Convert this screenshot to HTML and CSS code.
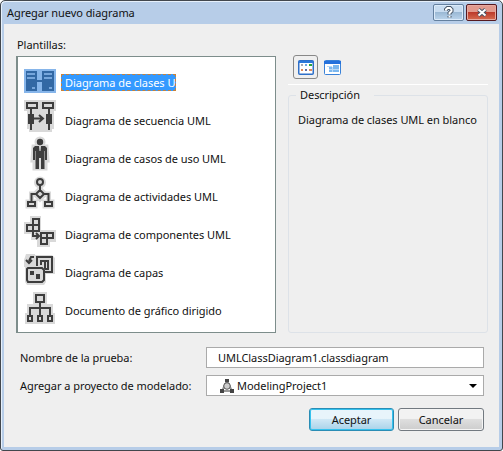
FILE: index.html
```
<!DOCTYPE html>
<html lang="es">
<head>
<meta charset="utf-8">
<title>Agregar nuevo diagrama</title>
<link rel="stylesheet" href="styles.css">
</head>
<body>
<main class="dialog">
  <header class="titlebar">
    <h1>Agregar nuevo diagrama</h1>
    <button class="cap help" aria-label="Ayuda"><svg width="12" height="13" viewBox="0 0 12 13"><path class="out" d="M3 4.500V3.500L4.500 2H7L8.500 3.500V5L6.500 7V8.500M6.500 10V11.500"/><path class="in" d="M3 4.500V3.500L4.500 2H7L8.500 3.500V5L6.500 7V8.500M6.500 10V11.500"/></svg></button>
    <button class="cap close" aria-label="Cerrar"><svg width="12" height="11" viewBox="0 0 12 11"><path class="out" d="M2.500 2.500L9.500 8.500M9.500 2.500L2.500 8.500"/><path class="in" d="M2.500 2.500L9.500 8.500M9.500 2.500L2.500 8.500"/></svg></button>
  </header>
  <section class="body">
    <div class="top">
      <div class="left">
        <h2>Plantillas:</h2>
        <ul class="list">
          <li class="selected"><svg class="ico" viewBox="0 0 32 38"><path fill="#86b5ea" d="M0 5H32V29H0Z"/><path fill="#3268a4" d="M2 7H13V27H2ZM18 7H30V27H18ZM13 16H18V18H13Z"/><path stroke="#8dbbee" stroke-width="1.500" d="M3 10H11M3 14H11M20 10H28M20 14H28M8 24H11M25 24H28"/></svg><span class="name">Diagrama de clases U</span></li>
          <li><svg class="ico" viewBox="0 0 32 38"><path fill="#d9d9d9" d="M0-2H32V9H30V27H28V30H5V27H3V9H0Z"/><path class="ink" d="M3 1H13V6H3ZM19 1H29V6H19ZM7 7V28M25 7V28M10 16.500H19M15 13L19 16.500L15 20"/><path class="solid" d="M4 12H10V22H4ZM22 12H28V22H22Z"/></svg><span class="name">Diagrama de secuencia UML</span></li>
          <li><svg class="ico" viewBox="0 0 32 38"><path class="halo" d="M16-1A3 3 0 0 1 16 5A3 3 0 0 1 16-1M10 7H22L23 20H21V28H11V20H9Z"/><circle class="solid" cx="16" cy="2" r="3.200"/><path class="solid" d="M11 6H21L23 8V20H21V11H20.500V29H17V18H15V29H11.500V11H11V20H9V8Z"/><path fill="#d9d9d9" d="M15 6H17L16.500 11H15.500Z"/></svg><span class="name">Diagrama de casos de uso UML</span></li>
          <li><svg class="ico" viewBox="0 0 32 38"><path class="halo" d="M16 1A3 3 0 0 1 16 8A3 3 0 0 1 16 1M16 8V12M16 11L21 16L16 21L11 16ZM11 16H7.500V24M21 16H24.500V24M4 24H11V28H4ZM21 24H28V28H21Z"/><circle class="ink" cx="16" cy="4" r="3"/><path class="ink" d="M16 7V12M16 12L20 16L16 20L12 16ZM12 16H7.500V24M20 16H24.500V24M4 24H11V28H4ZM21 24H28V28H21Z"/></svg><span class="name">Diagrama de actividades UML</span></li>
          <li><svg class="ico" viewBox="0 0 32 38"><path fill="#d9d9d9" d="M6 0H17V14H32V26H26V31H13V24H7V18H0V6H6Z"/><path class="ink" d="M9 3H15V9H9ZM3 9H15V15H3ZM9 9V15M17 17H29V22H17ZM23 17V22M17 22H23V28H17ZM9 15V20H14M12 17L15 20L12 23"/></svg><span class="name">Diagrama de componentes UML</span></li>
          <li><svg class="ico" viewBox="0 0 32 38"><path fill="#d9d9d9" d="M2 0H11V1H28L31 4V20H22V28L20 31H3L1 28V13H0V6Z"/><path class="ink" d="M13 12V3H28V18H21M17 11V7H24V15H21M21 7V15M10 3H7L5 7M2 6L5 9L8 6M4 14H18L20 16V26L18 28H4L3 26V15Z"/><path class="solid" d="M6 17H10V21H6ZM12 20H16V25H12Z"/></svg><span class="name">Diagrama de capas</span></li>
          <li><svg class="ico" viewBox="0 0 32 38"><path fill="#d9d9d9" d="M9 0H23V12H29V21H31V32H1V21H3V12H9Z"/><path class="ink" d="M12 3H20V10H12ZM16 10V24M6 24V16H26V24M4 24H8V29H4ZM14 24H18V29H14ZM24 24H28V29H24Z"/></svg><span class="name">Documento de gráfico dirigido</span></li>
        </ul>
      </div>
      <div class="right">
        <div class="views">
          <span class="view on"><svg width="16" height="15" viewBox="0 0 16 15"><rect x=".75" y=".75" width="14.500" height="13.500" rx="1" fill="#fff" stroke="#2e6fc8" stroke-width="1.500"/><path fill="#2c78da" d="M1 1H15V3H1Z"/><path fill="#a9a9b4" d="M3 4H5V6H3Z"/><path fill="#6ba6e6" d="M7 4H9V6H7Z"/><path fill="#29a43a" d="M11 4H14V6H11Z"/><path fill="#e08a58" d="M11 9H14V11H11ZM3 9H5V11H3Z"/><path fill="#5f6da6" d="M7 9H9V11H7Z"/></svg></span>
          <span class="view"><svg width="17" height="15" viewBox="0 0 17 15"><rect x=".5" y=".5" width="16" height="14" rx="1" fill="#fff" stroke="#3a82d8"/><path fill="#2471dc" d="M0 1H17V4H0Z"/><path fill="#7bb7ee" d="M9 5H15V7H9ZM5 7H15V12H5Z"/><path fill="#b9d9f7" d="M5 9H15V10H5ZM8 7H9V12H8ZM3 6H8V7H3Z"/></svg></span>
        </div>
        <fieldset><legend>Descripción</legend><p>Diagrama de clases UML en blanco</p></fieldset>
      </div>
    </div>
    <div class="form">
      <label>Nombre de la prueba:</label><div class="field">UMLClassDiagram1.classdiagram</div>
      <label>Agregar a proyecto de modelado:</label><div class="field combo"><svg width="14" height="14" viewBox="0 0 14 14"><path stroke="#999" stroke-width="2" fill="none" d="M7 2L2 12H12Z"/><circle cx="7" cy="7" r="3.300" fill="#ccc" stroke="#555"/><path fill="#444" d="M5 0H9V3H5ZM0 10H4V14H0ZM10 10H14V14H10Z"/></svg><span class="proj">ModelingProject1</span><i class="arrow"></i></div>
    </div>
    <footer><button class="btn primary">Aceptar</button><button class="btn">Cancelar</button></footer>
  </section>
</main>
</body>
</html>
```
FILE: styles.css
```
* { box-sizing: border-box; }
body { margin: 0; background: #fff; font: 11px/16px "Noto Sans", sans-serif; letter-spacing: -0.05px; color: #111; }
h1, h2, p, ul, fieldset { margin: 0; padding: 0; font: inherit; }
button { font: inherit; letter-spacing: inherit; color: inherit; padding: 0; }
.dialog { width: 503px; height: 451px; border: 1px solid #42474d; border-radius: 5px 5px 3px 3px; background: #b7cde8; padding: 0 3px 3px; box-shadow: inset 1px 1px #e6f0fb; overflow: hidden; white-space: nowrap; }
.titlebar { height: 23px; display: flex; padding: 3px 2px 0 3px; gap: 2px; }
h1 { flex: 1; line-height: 18px; }
.cap { width: 31px; height: 17px; border: 1px solid #64809f; border-radius: 2px; display: flex; align-items: center; justify-content: center; background: linear-gradient(#c8dcf0 45%, #9bb9d5 50%, #bcd5ec); box-shadow: inset 0 0 0 1px #dcebfa; }
.close { border-color: #551920; background: linear-gradient(#e29a8d 45%, #bd3b2b 50%, #d66d50); box-shadow: inset 0 0 0 1px #e8aaa0; }
.cap path { fill: none; }
.out { stroke: #485667; stroke-width: 4; }
.in { stroke: #fff; stroke-width: 2; }
.body { height: 423px; background: #efefef; padding: 12px 10px 0 12px; }
.top { display: flex; gap: 12px; }
.left { width: 260px; }
h2 { line-height: 18px; height: 20px; padding-left: 1px; }
.list { list-style: none; height: 277px; border: 1px solid #7d8d8b; border-left-width: 2px; background: #fff; padding: 7px 0 0 6px; }
.list li { height: 38px; display: flex; align-items: center; gap: 5px; }
.ico { width: 32px; height: 38px; overflow: visible; }
.ink { fill: none; stroke: #3d3d3d; stroke-width: 2; }
.solid { fill: #3d3d3d; }
.halo { fill: #d9d9d9; stroke: #d9d9d9; stroke-width: 5; }
.name { padding-left: 4px; }
.selected .name { width: 115px; height: 17px; margin-top: -1px; line-height: 16px; padding-left: 3px; border: 1px dashed #c98238; background: #3399ff; color: #fff; }
.right { width: 200px; padding-top: 18px; }
.views { display: flex; align-items: center; gap: 6px; height: 31px; padding: 0 0 4px 5px; border-bottom: 1px solid #fff; }
.view { display: flex; }
.on { width: 25px; height: 24px; border: 1px solid #888; border-radius: 3px; align-items: center; justify-content: center; }
fieldset { border: 1px solid #dde2e8; border-radius: 3px; height: 246px; margin-top: 2px; min-width: 0; padding: 9px 0 0 9px; }
legend { padding: 0 14px 0 4px; margin-left: -2px; line-height: 16px; }
.form { display: grid; grid-template-columns: 190px 278px; row-gap: 7px; padding-top: 14px; align-items: center; }
label { padding-left: 4px; }
.field { height: 21px; background: #fff; border: 1px solid #aaa; padding-left: 11px; line-height: 19px; }
.combo { display: flex; align-items: center; padding: 0 6px 0 13px; }
.proj { flex: 1; padding-left: 3px; }
.arrow { border: 4px solid transparent; border-top-color: #000; border-bottom: 0; }
footer { display: flex; justify-content: flex-end; gap: 4px; padding: 12px 5px 0 0; }
.btn { width: 86px; height: 23px; border: 1px solid #727980; border-radius: 3px; background: linear-gradient(#f2f2f2 45%, #dedede 50%, #cdcdcd); box-shadow: inset 0 0 0 1px #f5f5f5; }
.primary { width: 85px; border-color: #2a8db5; background: linear-gradient(#e8f4fb 45%, #cfe7f5 50%, #a8d2e9); box-shadow: inset 0 0 0 1px #35c2ee; }
```
